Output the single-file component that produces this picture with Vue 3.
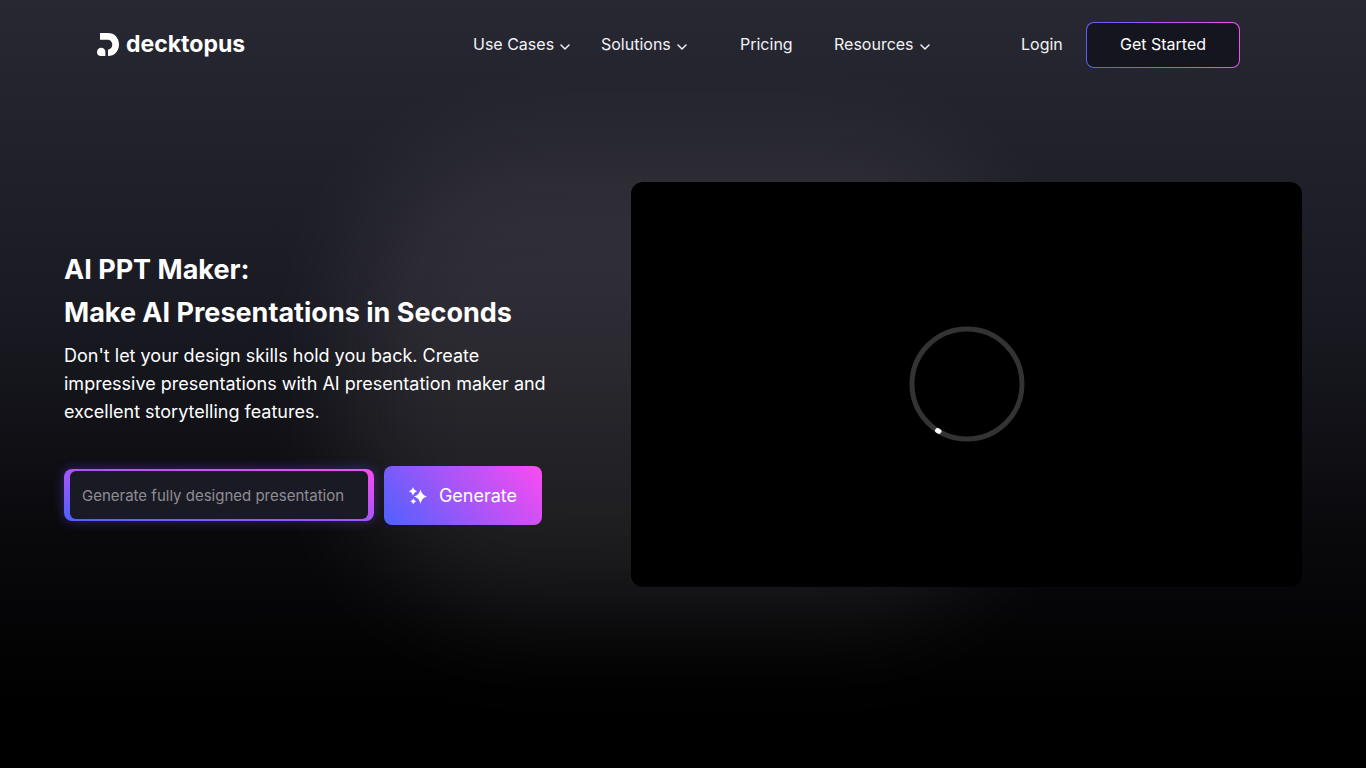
<script setup>
const links = [
  { label: 'Use Cases', menu: true },
  { label: 'Solutions', menu: true },
  { label: 'Pricing', menu: false },
  { label: 'Resources', menu: true },
  { label: 'Login', menu: false },
]
</script>

<template>
  <div class="page">
    <div class="glow" aria-hidden="true"></div>
    <header class="header">
      <a class="logo" href="#">
        <svg class="mark" viewBox="0 0 22 23" aria-hidden="true">
          <path d="M3 0h8C17.500 0 22 4.800 22 11.500S17.500 23 11 23V16.800c2.600-.5 4.300-2.600 4.300-5 0-2.900-2-5-4.800-5H3z" />
          <path d="M0 19a4 4 0 0 1 8.400 0V23H4A4 4 0 0 1 0 19z" />
        </svg>
        <span>decktopus</span>
      </a>
      <nav class="nav" aria-label="Main">
        <a v-for="link in links" :key="link.label" href="#">
          {{ link.label }}
          <svg v-if="link.menu" class="chevron" viewBox="0 0 10 6" aria-hidden="true">
            <path d="M1 1l4 4 4-4" />
          </svg>
        </a>
      </nav>
      <a class="start" href="#">Get Started</a>
    </header>

    <main class="hero">
      <section class="intro">
        <h1>AI PPT Maker:<br />Make AI Presentations in Seconds</h1>
        <p>
          Don't let your design skills hold you back. Create impressive
          presentations with AI presentation maker and excellent storytelling
          features.
        </p>
        <form class="prompt" @submit.prevent>
          <div class="field">
            <input type="text" aria-label="Presentation topic" placeholder="Generate fully designed presentation" />
          </div>
          <button type="submit">
            <svg class="sparkles" viewBox="0 0 18 18" aria-hidden="true">
              <path d="M11.500 2.500c1.400 4.300 2.500 5.600 6.500 7.100-4 1.500-5.100 2.800-6.500 7.100-1.400-4.300-2.500-5.600-6.500-7.100 4-1.500 5.100-2.800 6.500-7.100z" />
              <path d="M4 0c1 2.600 1.700 3.300 4.200 4.200C5.700 5.200 5 5.900 4 8.400 3 5.900 2.300 5.200-.2 4.200 2.300 3.300 3 2.600 4 0z" />
              <path d="M4.300 11.200c.7 1.900 1.200 2.400 3.100 3.100-1.900.8-2.400 1.300-3.100 3.100-.7-1.800-1.200-2.300-3.100-3.100 1.900-.7 2.400-1.200 3.100-3.100z" />
            </svg>
            Generate
          </button>
        </form>
      </section>
      <section class="video" aria-label="Product video">
        <svg class="spinner" viewBox="0 0 116 116" role="img" aria-label="Loading">
          <circle cx="58" cy="58" r="55" />
          <path d="M28.600 104.500l1.400.8" />
        </svg>
      </section>
    </main>
  </div>
</template>

<style>
body {
  margin: 0;
  background: #000;
}
</style>

<style scoped>
.page {
  position: relative;
  min-height: 100vh;
  overflow: hidden;
  box-sizing: border-box;
  color: #fff;
  font-family: Inter, "Liberation Sans", sans-serif;
  background: linear-gradient(180deg, #282833 0%, #1a1a23 40%, #09090c 70%, #000 92%);
}
.glow {
  position: absolute;
  top: 20%;
  left: 26%;
  width: 48%;
  height: 60%;
  border-radius: 160px;
  background: rgba(255, 238, 245, 0.085);
  filter: blur(54px);
}
.header,
.hero {
  position: relative;
}
.header {
  display: flex;
  align-items: center;
  padding: 22px 126px 0 97px;
  font-size: 16px;
}
a {
  color: inherit;
  text-decoration: none;
}
.logo {
  display: flex;
  align-items: center;
  gap: 7px;
  margin-right: auto;
  padding-bottom: 2px;
  font-size: 23px;
  line-height: 28px;
  font-weight: 700;
}
.mark {
  width: 22px;
  height: 23px;
  fill: #fff;
}
.nav {
  display: grid;
  grid-template-columns: 128px 139px 94px 187px 65px;
  padding-bottom: 2px;
}
.nav a {
  display: flex;
  align-items: center;
  gap: 6px;
  color: #f2f2f5;
}
.chevron {
  width: 10px;
  height: 6px;
  margin-top: 5px;
  fill: none;
  stroke: currentColor;
  stroke-width: 1.5;
  stroke-linecap: round;
  stroke-linejoin: round;
}
.start {
  box-sizing: border-box;
  width: 154px;
  padding-bottom: 2px;
  border: 1px solid transparent;
  border-radius: 8px;
  line-height: 42px;
  text-align: center;
  background:
    linear-gradient(#14151e, #14151e) padding-box,
    linear-gradient(65deg, #4d61ff, #a855f7 50%, #f652f1) border-box;
}
.hero {
  display: grid;
  grid-template-columns: 11fr 13fr;
  align-items: center;
  padding: 114px 64px 0;
}
.intro {
  padding-top: 4px;
}
h1 {
  margin: 0;
  font-size: 27px;
  line-height: 43px;
  font-weight: 700;
}
p {
  max-width: 500px;
  margin: 8px 0 40px;
  font-size: 18px;
  line-height: 28px;
}
.prompt {
  display: flex;
  align-items: center;
  gap: 10px;
}
.field {
  box-sizing: border-box;
  width: 310px;
  padding: 2px 6px;
  border-radius: 8px;
  background: linear-gradient(to top right, #4d61ff, #a855f7 50%, #f94cf0);
  box-shadow: 0 0 12px rgba(120, 70, 255, 0.4);
}
input {
  display: block;
  box-sizing: border-box;
  width: 100%;
  height: 48px;
  padding: 0 12px;
  border: 0;
  border-radius: 6px;
  outline: 0;
  color: #fff;
  font: 15px Inter, "Liberation Sans", sans-serif;
  background: #1a1a24;
}
input::placeholder {
  color: #8e8e93;
  opacity: 1;
}
button {
  display: flex;
  align-items: center;
  justify-content: center;
  gap: 12px;
  width: 158px;
  height: 59px;
  padding: 0;
  border: 0;
  border-radius: 8px;
  color: #fff;
  font: 18px Inter, "Liberation Sans", sans-serif;
  background: linear-gradient(50deg, #4d61ff, #a855f7 50%, #f94cf0);
}
.sparkles {
  width: 18px;
  height: 18px;
  margin-top: 2px;
  overflow: visible;
  fill: #fff;
}
.video {
  display: grid;
  place-items: center;
  aspect-ratio: 53 / 32;
  border-radius: 12px;
  background: #000;
}
.spinner {
  width: 116px;
  height: 116px;
  fill: none;
}
.spinner circle {
  stroke: #333;
  stroke-width: 5;
}
.spinner path {
  stroke: #fff;
  stroke-width: 5;
  stroke-linecap: round;
}
</style>
